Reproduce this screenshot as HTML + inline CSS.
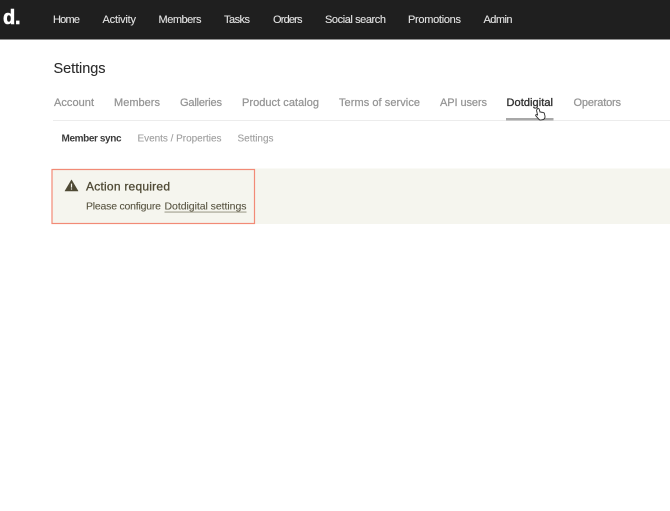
<!DOCTYPE html>
<html><head><meta charset="utf-8"><style>
html,body{margin:0;padding:0;background:#fff;width:670px;height:511px;overflow:hidden}
svg{display:block;font-family:"Liberation Sans",Arial,sans-serif}
.b{filter:blur(.3px)}
.n{font-size:11px;fill:#e2e2e2;stroke:#e2e2e2;stroke-width:.12px}
.t{font-size:11px;fill:#959595;stroke:#959595;stroke-width:.25px}
.s{font-size:10px;fill:#9d9d9d;stroke:#9d9d9d;stroke-width:.1px}
</style></head><body>
<svg width="670" height="511" viewBox="0 0 670 511" xmlns="http://www.w3.org/2000/svg">
<rect width="670" height="39.5" fill="#1f1f1f"/>
<rect x="53" y="168.5" width="617" height="55.5" fill="#f5f5ee"/>
<rect x="52" y="169.5" width="202.5" height="54" fill="#f5f5ee" stroke="#f28a76" stroke-width="1.2"/>
<rect x="53" y="120" width="617" height="1" fill="#ececec"/>
<g class="b">
<text x="3" y="24" font-size="20" font-weight="700" fill="#fff" stroke="#fff" stroke-width=".6" textLength="17.5">d.</text>
<text class="n" x="53" y="23" textLength="27">Home</text>
<text class="n" x="102.5" y="23" textLength="33.5">Activity</text>
<text class="n" x="158.5" y="23" textLength="43">Members</text>
<text class="n" x="224" y="23" textLength="26">Tasks</text>
<text class="n" x="273" y="23" textLength="29.5">Orders</text>
<text class="n" x="325" y="23" textLength="61">Social search</text>
<text class="n" x="408" y="23" textLength="53">Promotions</text>
<text class="n" x="483.5" y="23" textLength="29">Admin</text>

<text x="53.5" y="73" font-size="14.5" fill="#2b2b2b" stroke="#2b2b2b" stroke-width=".1" textLength="52">Settings</text>

<text class="t" x="54" y="106" textLength="40">Account</text>
<text class="t" x="114" y="106" textLength="46">Members</text>
<text class="t" x="180" y="106" textLength="42">Galleries</text>
<text class="t" x="242" y="106" textLength="77">Product catalog</text>
<text class="t" x="339" y="106" textLength="81">Terms of service</text>
<text class="t" x="440" y="106" textLength="47">API users</text>
<text x="506.5" y="106" font-size="11" fill="#333" stroke="#333" stroke-width=".35" textLength="46.5">Dotdigital</text>
<text class="t" x="573.5" y="106" textLength="47.5">Operators</text>
<rect x="506" y="118" width="47.5" height="2.5" fill="#a8a8a8"/>

<path d="M537.5 108.6c.8-.5 1.5 0 1.7.7l.9 2.9c.5-.4 1.1-.3 1.4.2.5-.3 1.1-.2 1.4.3.6-.2 1.2 0 1.4.6l.6 2.4c.4 1.6-.3 3-1.4 3.8l-3 .6c-1 0-1.5-.7-2-1.3l-2.7-3c-.4-.6 0-1.3.7-1.2l1.1.5-1-4.5c-.1-.5 0-.9.4-1z" fill="#fff" stroke="#2a2a2a" stroke-width=".9" stroke-linejoin="round"/>

<text x="61.5" y="141.5" font-size="10" font-weight="700" fill="#3a3a3a" textLength="60">Member sync</text>
<text class="s" x="137.5" y="141.5" textLength="84">Events / Properties</text>
<text class="s" x="237.5" y="141.5" textLength="36">Settings</text>

<path d="M71.5 180 L78 191 L65 191 Z" fill="#4f4a35" stroke="#4f4a35" stroke-width=".6" stroke-linejoin="round"/>
<rect x="70.9" y="183.6" width="1.2" height="4" fill="#f5f5ee"/>
<rect x="70.9" y="188.4" width="1.2" height="1.2" fill="#f5f5ee"/>
<text x="86" y="190.5" font-size="12" fill="#4f4a35" stroke="#4f4a35" stroke-width=".3" textLength="84">Action required</text>
<text x="86" y="209.5" font-size="10.5" fill="#56523f" stroke="#56523f" stroke-width=".08" textLength="75">Please configure</text>
<text x="164.5" y="209.5" font-size="10.5" fill="#56523f" stroke="#56523f" stroke-width=".08" textLength="82">Dotdigital settings</text>
<rect x="164.5" y="211.6" width="82" height="0.9" fill="#8d8a78"/>
</g>
</svg>
</body></html>
